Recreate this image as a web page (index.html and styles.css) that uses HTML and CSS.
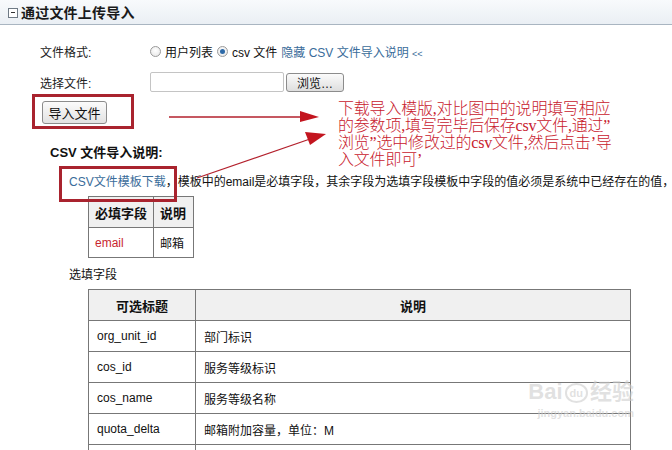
FILE: index.html
```html
<!DOCTYPE html>
<html lang="zh">
<head>
<meta charset="utf-8">
<title>通过文件上传导入</title>
<link rel="stylesheet" href="styles.css">
</head>
<body>
<div class="page">
  <div class="header">
    <span class="toggle"></span>
    <span class="title">通过文件上传导入</span>
  </div>

  <div class="form">
    <div class="row row1">
      <span class="label">文件格式:</span>
      <span class="radio"></span><span class="opt">用户列表</span>
      <span class="radio checked"></span><span class="opt">csv 文件</span>
      <a class="link">隐藏 CSV 文件导入说明 <small>&lt;&lt;</small></a>
    </div>
    <div class="row row2">
      <span class="label">选择文件:</span>
      <span class="file-input"></span>
      <span class="browse">浏览…</span>
    </div>
    <div class="row row3">
      <span class="import-btn">导入文件</span>
    </div>
  </div>

  <div class="help">
    <div class="help-title">CSV 文件导入说明:</div>
    <div class="help-text"><a class="link">CSV文件模板下载</a>，模板中的email是必填字段，其余字段为选填字段模板中字段的值必须是系统中已经存在的值，</div>
    <table class="t1">
      <tr><th class="c1">必填字段</th><th class="c2">说明</th></tr>
      <tr><td class="c1 red">email</td><td class="c2">邮箱</td></tr>
    </table>
    <div class="optional">选填字段</div>
    <table class="t2">
      <tr><th class="c1">可选标题</th><th>说明</th></tr>
      <tr><td class="c1">org_unit_id</td><td>部门标识</td></tr>
      <tr><td class="c1">cos_id</td><td>服务等级标识</td></tr>
      <tr><td class="c1">cos_name</td><td>服务等级名称</td></tr>
      <tr><td class="c1">quota_delta</td><td>邮箱附加容量，单位：M</td></tr>
      <tr><td class="c1">&nbsp;</td><td>&nbsp;</td></tr>
    </table>
  </div>

  <div class="mark box1"></div>
  <div class="mark box2"></div>
  <svg class="arrows" width="672" height="450" viewBox="0 0 672 450">
    <line x1="169" y1="117" x2="302" y2="117" stroke="#b3202c" stroke-width="1.3"/>
    <polygon points="300,111 319,117 300,122" fill="#c3151f"/>
    <line x1="197" y1="178" x2="310" y2="139" stroke="#b3202c" stroke-width="1.3"/>
    <polygon points="305,132 326,134 310,145" fill="#c3151f"/>
  </svg>
  <div class="note">
    <span>下载导入模版,对比图中的说明填写相应</span>
    <span>的参数项,填写完毕后保存csv文件,通过”</span>
    <span>浏览”选中修改过的csv文件,然后点击’导</span>
    <span>入文件即可’</span>
  </div>
  <div class="watermark">
    <span class="wm-big">Bai<span class="paw">du</span>经验</span>
    <span class="wm-small">jingyan.baidu.com</span>
  </div>
</div>
</body>
</html>
```

FILE: styles.css
```css
* { box-sizing: border-box; }
html, body { margin: 0; padding: 0; background: #fff; }
body {
  font-family: "Liberation Sans", "Noto Sans CJK SC", sans-serif;
  font-size: 12px;
  color: #111;
}
.page {
  position: relative;
  width: 672px;
  height: 450px;
  overflow: hidden;
}
.header {
  height: 25px;
  background: linear-gradient(#f8fafc, #eaeff4);
  border-bottom: 1px solid #a9b5c1;
  display: flex;
  align-items: center;
  padding-left: 8px;
}
.toggle {
  width: 10px;
  height: 10px;
  border: 1px solid #6f7a85;
  background: #fff;
  position: relative;
  margin-right: 3px;
  margin-top: 1px;
}
.toggle::after {
  content: "";
  position: absolute;
  left: 2px;
  right: 2px;
  top: 3px;
  height: 1px;
  background: #333;
}
.title {
  font-size: 14px;
  font-weight: bold;
  color: #1a1a1a;
  letter-spacing: 0.2px;
}
.form {
  padding-left: 40px;
}
.row {
  display: flex;
  align-items: center;
}
.row1 { margin-top: 16px; height: 20px; }
.row2 { margin-top: 11px; height: 20px; }
.row3 { margin-top: 9px; height: 23px; }
.label {
  width: 110px;
  color: #222;
}
.radio {
  width: 11px;
  height: 11px;
  border-radius: 50%;
  border: 1px solid #9a9a9a;
  background: radial-gradient(circle at 50% 40%, #fff 0, #e4e4e4 100%);
  margin-right: 4px;
  position: relative;
}
.radio.checked::after {
  content: "";
  position: absolute;
  left: 2px;
  top: 2px;
  width: 5px;
  height: 5px;
  border-radius: 50%;
  background: #2e6aa8;
}
.opt { margin-right: 4px; }
.link {
  color: #3a6c9a;
  text-decoration: none;
}
.link small { font-size: 9px; }
.file-input {
  width: 134px;
  height: 20px;
  border: 1px solid #c4c4c4;
  border-radius: 2px;
  background: #fff;
}
.browse {
  width: 58px;
  height: 19px;
  margin-left: 2px;
  border: 1px solid #8c8c8c;
  border-radius: 3px;
  background: linear-gradient(#fbfbfb, #dedede);
  display: flex;
  align-items: center;
  justify-content: center;
  font-size: 12px;
}
.import-btn {
  margin-left: 2px;
  width: 65px;
  height: 23px;
  border: 1px solid #8c8c8c;
  border-radius: 3px;
  background: linear-gradient(#fbfbfb, #e2e2e2);
  display: flex;
  align-items: center;
  justify-content: center;
  font-size: 13px;
}
.help { padding-left: 50px; }
.help-title {
  margin-top: 21px;
  font-weight: bold;
  font-size: 13px;
  line-height: 16px;
}
.help-text {
  margin-top: 13px;
  margin-left: 19px;
  line-height: 16px;
  white-space: nowrap;
}
table {
  border-collapse: collapse;
}
th, td {
  border: 1px solid #777;
  padding: 0 8px;
  text-align: left;
  height: 31px;
  font-size: 12px;
}
th {
  background: #f0f0f0;
  font-weight: bold;
  font-size: 13px;
}
.t1 {
  margin-top: 6px;
  margin-left: 38px;
}
.t1 th, .t1 td { padding: 0 6px; }
.t1 .c1 { width: 65px; }
.t1 .c2 { width: 40px; }
.t1 td { height: 30px; }
.red { color: #c8262f; }
.optional {
  margin-top: 9px;
  margin-left: 19px;
  line-height: 16px;
}
.t2 {
  margin-top: 6px;
  margin-left: 38px;
  width: 543px;
}
.t2 .c1 { width: 107px; }
.t2 th { text-align: center; }
.mark {
  position: absolute;
  border: 3px solid #a9232e;
}
.box1 { left: 32px; top: 94px; width: 102px; height: 35px; }
.box2 { left: 59px; top: 166px; width: 118px; height: 36px; }
.arrows {
  position: absolute;
  left: 0;
  top: 0;
  pointer-events: none;
}
.note {
  position: absolute;
  left: 338px;
  top: 100px;
  display: flex;
  flex-direction: column;
  color: #c8202d;
  font-family: "Liberation Serif", "Noto Sans CJK SC", serif;
  font-weight: 300;
  font-size: 16px;
  line-height: 17px;
  white-space: nowrap;
  letter-spacing: -0.2px;
}
.watermark {
  position: absolute;
  left: 512px;
  top: 378px;
  display: flex;
  flex-direction: column;
  align-items: flex-end;
  width: 122px;
  color: rgba(205, 205, 205, 0.6);
  pointer-events: none;
  white-space: nowrap;
}
.wm-big {
  font-size: 22px;
  line-height: 28px;
  font-weight: bold;
  font-family: "Liberation Sans", "Noto Sans CJK SC", sans-serif;
}
.paw {
  font-size: 11px;
  line-height: 14px;
  display: inline-block;
  border: 2px solid rgba(205, 205, 205, 0.6);
  border-radius: 50%;
  padding: 1px 3px;
  margin: 0 2px;
  vertical-align: middle;
}
.wm-small {
  font-size: 11px;
  line-height: 14px;
  font-weight: bold;
}
```
